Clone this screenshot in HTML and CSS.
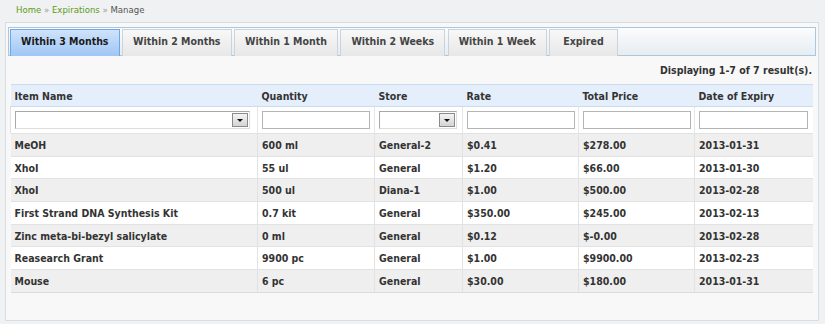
FILE: index.html
```html
<!DOCTYPE html>
<html lang="en">
<head>
  <meta charset="UTF-8">
  <title>Manage Expirations</title>
  <link rel="stylesheet" href="styles.css">
</head>
<body>
  <div class="breadcrumbs">
    <a href="#">Home</a> <span class="sep">&raquo;</span> <a href="#">Expirations</a> <span class="sep">&raquo;</span> <span>Manage</span>
  </div>

  <div class="panel">
    <ul class="tabs">
      <li class="tab active">Within 3 Months</li>
      <li class="tab">Within 2 Months</li>
      <li class="tab">Within 1 Month</li>
      <li class="tab">Within 2 Weeks</li>
      <li class="tab">Within 1 Week</li>
      <li class="tab">Expired</li>
    </ul>

    <div class="summary">Displaying 1-7 of 7 result(s).</div>

    <table class="items">
      <colgroup>
        <col class="c1"><col class="c2"><col class="c3"><col class="c4"><col class="c5"><col class="c6">
      </colgroup>
      <thead>
        <tr>
          <th>Item Name</th>
          <th>Quantity</th>
          <th>Store</th>
          <th>Rate</th>
          <th>Total Price</th>
          <th>Date of Expiry</th>
        </tr>
        <tr class="filters">
          <td><div class="select wide"><span class="arrow"></span></div></td>
          <td><input type="text" class="field"></td>
          <td><div class="select narrow"><span class="arrow"></span></div></td>
          <td><input type="text" class="field"></td>
          <td><input type="text" class="field"></td>
          <td><input type="text" class="field"></td>
        </tr>
      </thead>
      <tbody>
        <tr class="odd"><td>MeOH</td><td>600 ml</td><td>General-2</td><td>$0.41</td><td>$278.00</td><td>2013-01-31</td></tr>
        <tr class="even"><td>XhoI</td><td>55 ul</td><td>General</td><td>$1.20</td><td>$66.00</td><td>2013-01-30</td></tr>
        <tr class="odd"><td>XhoI</td><td>500 ul</td><td>Diana-1</td><td>$1.00</td><td>$500.00</td><td>2013-02-28</td></tr>
        <tr class="even"><td>First Strand DNA Synthesis Kit</td><td>0.7 kit</td><td>General</td><td>$350.00</td><td>$245.00</td><td>2013-02-13</td></tr>
        <tr class="odd"><td>Zinc meta-bi-bezyl salicylate</td><td>0 ml</td><td>General</td><td>$0.12</td><td>$-0.00</td><td>2013-02-28</td></tr>
        <tr class="even"><td>Reasearch Grant</td><td>9900 pc</td><td>General</td><td>$1.00</td><td>$9900.00</td><td>2013-02-23</td></tr>
        <tr class="odd"><td>Mouse</td><td>6 pc</td><td>General</td><td>$30.00</td><td>$180.00</td><td>2013-01-31</td></tr>
      </tbody>
    </table>
  </div>
</body>
</html>
```

FILE: styles.css
```css
* {
  box-sizing: border-box;
}
body {
  margin: 0;
  background: #f0f1f2;
  font-family: "DejaVu Sans Condensed", "DejaVu Sans", sans-serif;
  font-size: 10.5px;
  color: #333;
  height: 324px;
}

.breadcrumbs {
  height: 22px;
  padding: 4px 0 0 16px;
  font-size: 9.5px;
  color: #555;
}
.breadcrumbs a {
  color: #5e9a14;
  text-decoration: none;
}
.breadcrumbs .sep {
  color: #999;
}

.panel {
  margin-left: 5px;
  width: 814px;
  height: 299px;
  border: 1px solid #d8dde2;
  background: #f8f8f8;
  padding: 4px 2px 0 2px;
}

.tabs {
  list-style: none;
  margin: 0;
  height: 29px;
  padding: 1px 0 0 1px;
  border: 1px solid #aac7de;
  background: linear-gradient(#fbfcfd, #e6ecf2);
  display: flex;
  gap: 2.5px;
}
.tab {
  height: 27px;
  padding: 5px 10px 0 10px;
  border: 1px solid #cbd2d8;
  border-bottom: 0;
  background: linear-gradient(#f8f8f8, #e7e7e7);
  font-weight: bold;
  color: #444;
  white-space: nowrap;
}
.tab:last-child {
  padding: 5px 13px 0 13px;
}
.tab.active {
  border-color: #6aa8e8;
  background: linear-gradient(#cfe3fb 0%, #b6d4f8 50%, #9fc6f5 100%);
  color: #1a1a1a;
}

.summary {
  text-align: right;
  font-weight: bold;
  padding: 8px 4px 0 0;
  height: 28px;
}

.items {
  margin-left: 2px;
  width: 802px;
  border-collapse: collapse;
  table-layout: fixed;
}
.c1 { width: 247px; }
.c2 { width: 117px; }
.c3 { width: 88px; }
.c4 { width: 116px; }
.c5 { width: 116px; }
.c6 { width: 118px; }

.items th {
  height: 22px;
  padding: 0 4px;
  text-align: left;
  background: #e5effb;
  border: 1px solid #c9dcf0;
  border-left: 0;
  border-right: 0;
  color: #333;
}
.items td {
  height: 22.7px;
  padding: 0 4px;
  font-weight: bold;
  border-bottom: 1px solid #e2e2e2;
  border-left: 1px solid #e2e2e2;
  white-space: nowrap;
}
.items td:first-child {
  border-left: 0;
}
.items tbody tr:last-child td {
  border-bottom: 1px solid #dcdcdc;
}
.items tr.odd td {
  background: #efefef;
}
.items tr.even td {
  background: #ffffff;
}
.items tr.filters td {
  height: 27px;
  background: #ffffff;
  border-left: 1px solid #e6e6e6;
}
.items tr.filters td:first-child {
  border-left: 1px solid #e2e2e2;
}

.field {
  display: block;
  width: 108px;
  height: 18px;
  margin: 0;
  border: 1px solid #b4b4b4;
  background: #fff;
}
.items td:last-child .field {
  width: 109px;
}

.select {
  position: relative;
  height: 18px;
  border: 1px solid #a9a9a9;
  border-right-color: #ddd;
  border-bottom-color: #ddd;
  background: #fff;
}
.select.wide {
  width: 235px;
}
.select.narrow {
  width: 78px;
}
.select .arrow {
  position: absolute;
  right: 1px;
  top: 1px;
  width: 16px;
  height: 14px;
  border: 1px solid #8a8a8a;
  background: linear-gradient(#f4f4f4, #d4d4d4);
}
.select .arrow::after {
  content: "";
  position: absolute;
  left: 4px;
  top: 5px;
  border-left: 3px solid transparent;
  border-right: 3px solid transparent;
  border-top: 3px solid #111;
}
```
